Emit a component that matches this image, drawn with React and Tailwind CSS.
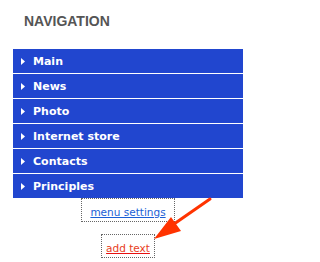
import React from "react";

const items = ["Main", "News", "Photo", "Internet store", "Contacts", "Principles"];

function Tri() {
  return (
    <svg width="4" height="7" viewBox="0 0 4 7" className="shrink-0">
      <polygon points="0,0 4,3.5 0,7" fill="#ffffff" />
    </svg>
  );
}

export default function App() {
  return (
    <div className="relative w-[256px] h-[262px] bg-white overflow-hidden">
      <div className="pl-[24px] pt-[13px] text-[14px] leading-[16px] font-bold text-[#555555]" style={{ fontFamily: '"Liberation Sans", Arial, sans-serif' }}>
        NAVIGATION
      </div>
      <div className="ml-[13px] mt-[20px] w-[230px] bg-[#2146cf]" style={{ fontFamily: '"DejaVu Sans", Verdana, sans-serif' }}>
        {items.map((t, i) => (
          <div
            key={t}
            className={`flex items-center h-[24px] pl-[8px] ${i > 0 ? "border-t border-white h-[25px]" : ""}`}
          >
            <Tri />
            <span className="ml-[8px] text-[11px] font-bold text-white leading-[23px] pt-[1px]">{t}</span>
          </div>
        ))}
      </div>
      <div className="flex flex-col items-center w-[256px]" style={{ fontFamily: '"DejaVu Sans", Verdana, sans-serif' }}>
        <a
          href="#"
          className="border border-dotted border-[#666666] px-[8px] pt-[7px] pb-[3px] text-[10.5px] leading-[12px] text-[#1a5fd6] underline decoration-[#1a5fd6]"
        >
          menu settings
        </a>
        <a
          href="#"
          className="mt-[12px] border border-dotted border-[#666666] px-[4px] pt-[7px] pb-[3px] text-[10.5px] leading-[12px] text-[#e8401c] underline decoration-[#e81010]"
        >
          add text
        </a>
      </div>
      <svg className="absolute left-0 top-0 pointer-events-none" width="256" height="262" viewBox="0 0 256 262">
        <line x1="210" y1="199" x2="174" y2="224" stroke="#ff3300" strokeWidth="3" strokeLinecap="round" />
        <polygon points="154,239 171,217 181,231" fill="#ff3300" />
      </svg>
    </div>
  );
}
